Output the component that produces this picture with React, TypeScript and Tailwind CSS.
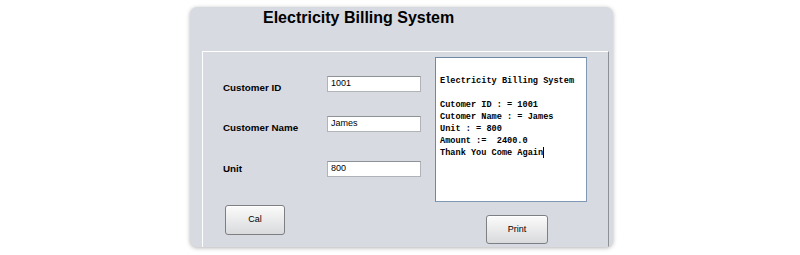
import React from 'react';

const receipt = [
  'Electricity Billing System',
  '',
  'Cutomer ID : = 1001',
  'Cutomer Name : = James',
  'Unit : = 800',
  'Amount :=  2400.0',
  'Thank You Come Again',
];

function Field({ label, value, className, labelPad }: { label: string; value: string; className?: string; labelPad: string }) {
  return (
    <div className={`flex h-[16px] items-start ${className ?? ''}`}>
      <span className={`w-[104px] text-[9.8px] font-bold leading-[12px] text-black ${labelPad}`}>{label}</span>
      <div className="flex h-[16px] w-[94px] items-center border border-[#b0b3b8] border-t-[#8e9196] bg-white pb-px pl-[3px] text-[9px] text-black">
        {value}
      </div>
    </div>
  );
}

function SwingButton({ children, className }: { children: React.ReactNode; className?: string }) {
  return (
    <button
      className={`flex items-center justify-center rounded-[3px] border border-[#7d7f83] bg-gradient-to-b from-[#fbfbfb] to-[#d9dadc] text-[9px] text-black shadow-[inset_0_1px_0_#fff] ${className ?? ''}`}
    >
      {children}
    </button>
  );
}

export default function App() {
  return (
    <div className="h-[255px] w-[800px] bg-white pt-[7px] pl-[190px]" style={{ fontFamily: '"Liberation Sans", Arial, sans-serif' }}>
      <div className="flex h-[240px] w-[423px] flex-col overflow-hidden rounded-[7px] bg-[#d7dae0] shadow-[0_1px_4px_rgba(0,0,0,0.3)]">
        <div className="h-[44px] pl-[73px] text-[16px] font-bold leading-[22px] text-black">Electricity Billing System</div>
        <div className="ml-[12px] mr-[4px] flex flex-1 border-l border-t border-l-white border-t-white border-r border-r-[#8d9095]">
          <div className="w-[232px] pl-[20px]">
            <Field label="Customer ID" value="1001" className="mt-[24px]" labelPad="pt-[6px]" />
            <Field label="Customer Name" value="James" className="mt-[24px]" labelPad="pt-[6px]" />
            <Field label="Unit" value="800" className="mt-[29px]" labelPad="pt-[2px]" />
            <SwingButton className="ml-[2px] mt-[28px] h-[30px] w-[60px]">Cal</SwingButton>
          </div>
          <div className="pt-[5px]">
            <div
              className="h-[145px] w-[152px] border border-[#7f98b6] border-l-[#6f88a6] border-t-[#6f88a6] bg-white pl-[4px] pt-[17px] text-[8.6px] font-bold leading-[12px] text-black"
              style={{ fontFamily: '"Liberation Mono", "Courier New", monospace' }}
            >
              {receipt.map((line, i) => (
                <div key={i} className="h-[12px] whitespace-pre">
                  {line}
                  {i === receipt.length - 1 && <span className="inline-block h-[11px] w-px bg-black align-middle" />}
                </div>
              ))}
            </div>
            <SwingButton className="ml-[51px] mt-[13px] h-[29px] w-[62px]">Print</SwingButton>
          </div>
        </div>
      </div>
    </div>
  );
}
